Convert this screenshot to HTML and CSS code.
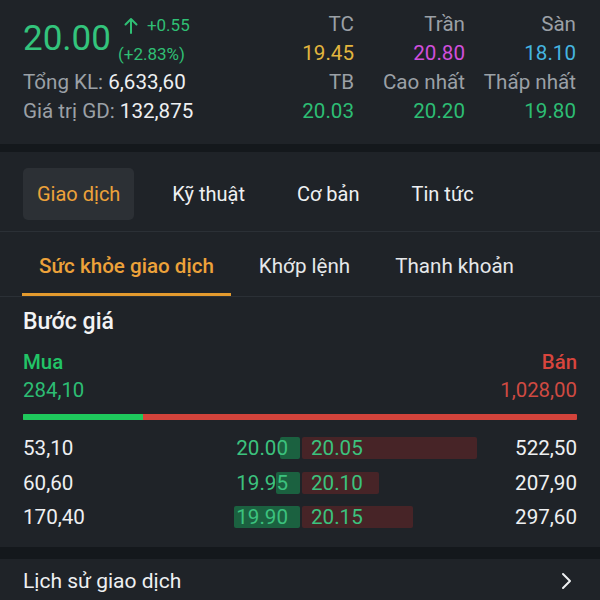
FILE: index.html
```html
<!DOCTYPE html>
<html lang="vi">
<head>
<meta charset="utf-8">
<title>Giao dịch</title>
<link rel="stylesheet" href="styles.css">
</head>
<body>
<div class="app">
  <section class="quote">
    <div class="quote-left">
      <div class="price-row">
        <span class="price">20.00</span>
        <div class="change">
          <div class="chg-top">
            <svg class="arrow" width="14" height="17" viewBox="0 0 14 17"><path d="M7 16V2M1.5 7.5L7 2l5.5 5.5" fill="none" stroke="currentColor" stroke-width="2" stroke-linecap="round" stroke-linejoin="round"/></svg>
            <span>+0.55</span>
          </div>
          <div>(+2.83%)</div>
        </div>
      </div>
      <div class="stat"><span class="lbl">Tổng KL:</span> <span class="val">6,633,60</span></div>
      <div class="stat"><span class="lbl">Giá trị GD:</span> <span class="val">132,875</span></div>
    </div>
    <div class="quote-grid">
      <span class="lbl">TC</span><span class="lbl">Trần</span><span class="lbl">Sàn</span>
      <span class="yellow">19.45</span><span class="magenta">20.80</span><span class="cyan">18.10</span>
      <span class="lbl">TB</span><span class="lbl">Cao nhất</span><span class="lbl">Thấp nhất</span>
      <span class="green">20.03</span><span class="green">20.20</span><span class="green">19.80</span>
    </div>
  </section>
  <div class="band"></div>
  <nav class="tabs">
    <span class="tab active">Giao dịch</span>
    <span class="tab">Kỹ thuật</span>
    <span class="tab">Cơ bản</span>
    <span class="tab">Tin tức</span>
  </nav>
  <nav class="subtabs">
    <span class="subtab active">Sức khỏe giao dịch</span>
    <span class="subtab">Khớp lệnh</span>
    <span class="subtab">Thanh khoản</span>
  </nav>
  <section class="steps">
    <h2 class="steps-title">Bước giá</h2>
    <div class="sides head"><span class="buy">Mua</span><span class="sell">Bán</span></div>
    <div class="sides"><span class="buy">284,10</span><span class="sell">1,028,00</span></div>
    <div class="ratio"><div class="ratio-buy" style="width:21.7%"></div></div>
    <div class="book">
      <div class="row">
        <span class="vol">53,10</span>
        <span class="bid"><i class="fill" style="width:20px"></i><b>20.00</b></span>
        <span class="ask"><i class="fill" style="width:175px"></i><b>20.05</b></span>
        <span class="vol right">522,50</span>
      </div>
      <div class="row">
        <span class="vol">60,60</span>
        <span class="bid"><i class="fill" style="width:24px"></i><b>19.95</b></span>
        <span class="ask"><i class="fill" style="width:77px"></i><b>20.10</b></span>
        <span class="vol right">207,90</span>
      </div>
      <div class="row">
        <span class="vol">170,40</span>
        <span class="bid"><i class="fill" style="width:66px"></i><b>19.90</b></span>
        <span class="ask"><i class="fill" style="width:111px"></i><b>20.15</b></span>
        <span class="vol right">297,60</span>
      </div>
    </div>
  </section>
  <div class="band band-2"></div>
  <div class="history">
    <span>Lịch sử giao dịch</span>
    <svg class="chev" width="12" height="18" viewBox="0 0 12 18"><path d="M3 2l7 7-7 7" fill="none" stroke="currentColor" stroke-width="2" stroke-linecap="round" stroke-linejoin="round"/></svg>
  </div>
</div>
</body>
</html>
```
FILE: styles.css
```css
* { box-sizing: border-box; }
html, body { margin: 0; padding: 0; }
body {
  background: #1f2328;
  font-family: Roboto, "Noto Sans", "Liberation Sans", sans-serif;
  color: #eef0f2;
  width: 600px;
  height: 600px;
  overflow: hidden;
}
.app { width: 600px; }

.quote {
  display: flex;
  justify-content: space-between;
  padding: 10px 24px 18px 23px;
  font-size: 20.6px;
  line-height: 29px;
}
.price-row { display: flex; align-items: center; height: 58px; }
.price { font-size: 35px; color: #33c47c; line-height: 58px; }
.change { margin-left: 7px; font-size: 17px; line-height: 29px; color: #2fbf74; }
.chg-top { display: flex; align-items: center; padding-left: 6px; padding-top: 2px; }
.arrow { margin-right: 9px; color: #2fbf74; }
.lbl { color: #9ba0a6; }
.val { color: #eef0f2; }
.quote-grid {
  display: grid;
  grid-template-columns: repeat(3, 111px);
  text-align: right;
}
.yellow { color: #e2b53e; }
.magenta { color: #d04fdc; }
.cyan { color: #45b5e0; }
.green { color: #2dbd74; }

.band { height: 8px; background: #14181c; }
.band-2 { height: 12px; }

.tabs {
  display: flex;
  gap: 24px;
  padding: 16px 23px 11px;
  border-bottom: 1px solid #2b3036;
  font-size: 20px;
}
.tab {
  height: 52px;
  line-height: 52px;
  padding: 0 14px;
  border-radius: 5px;
  color: #eef0f2;
}
.tab.active { background: #2c3035; color: #eda23a; }

.subtabs {
  display: flex;
  gap: 11px;
  padding-left: 22px;
  border-bottom: 1px solid #2b3036;
  font-size: 20.6px;
}
.subtab {
  padding: 8px 17px 0;
  line-height: 53px;
  border-bottom: 3px solid transparent;
  color: #e6e8ea;
}
.subtab.active { color: #eda23a; font-weight: 500; border-bottom-color: #e39a2e; }

.steps { padding: 0 23px 12px; }
.steps-title {
  margin: 10px 0 0;
  font-size: 23px;
  font-weight: 500;
  line-height: 30px;
  color: #f2f3f4;
}
.sides {
  display: flex;
  justify-content: space-between;
  font-size: 20.4px;
  line-height: 28px;
}
.sides.head { margin-top: 11px; font-weight: 500; }
.sides .buy { color: #2dbd74; }
.sides.head .buy { color: #22c467; }
.sides .sell { color: #cf4a42; }
.sides.head .sell { color: #d8453d; }

.ratio {
  margin-top: 10px;
  height: 6px;
  background: #d3433b;
  border-radius: 1px;
  overflow: hidden;
}
.ratio-buy { height: 100%; background: #1ec95c; }

.book { margin-top: 11px; }
.row {
  display: grid;
  grid-template-columns: 167px 110px 182px 1fr;
  height: 34.5px;
  align-items: center;
  font-size: 20.6px;
}
.vol { color: #eef0f2; }
.vol.right { text-align: right; }
.bid, .ask {
  position: relative;
  height: 22px;
  line-height: 22px;
}
.bid { text-align: right; padding-right: 12px; }
.ask { padding-left: 11px; }
.fill {
  position: absolute;
  top: 0;
  height: 22px;
  border-radius: 2px;
}
.bid .fill { right: 0; background: #1b6140; }
.ask .fill { left: 2px; background: #472427; }
.bid b, .ask b {
  position: relative;
  font-weight: 400;
  color: #3cc27e;
}

.history {
  display: flex;
  justify-content: space-between;
  align-items: center;
  height: 44px;
  padding: 0 28px 0 23px;
  font-size: 21px;
  color: #eef0f2;
}
.chev { color: #eef0f2; }
```
